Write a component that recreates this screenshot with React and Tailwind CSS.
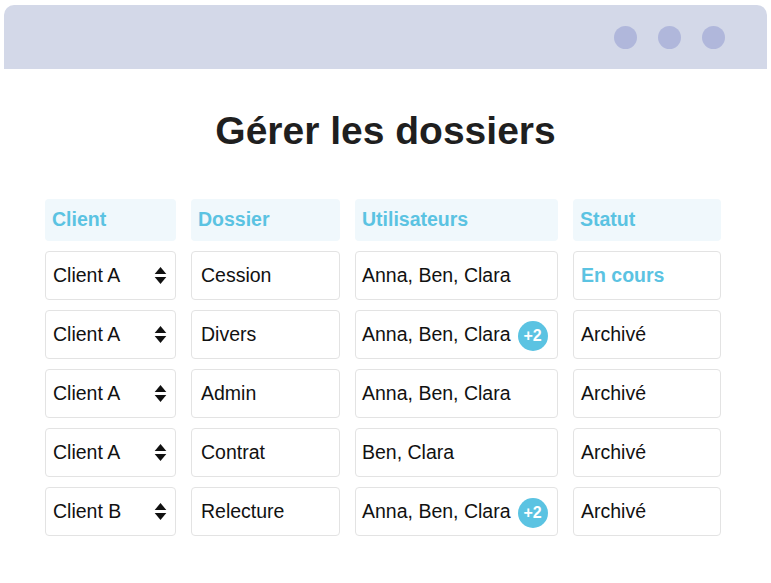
import React from 'react'

const rows = [
  { client: 'Client A', dossier: 'Cession', users: 'Anna, Ben, Clara', extra: null, status: 'En cours' },
  { client: 'Client A', dossier: 'Divers', users: 'Anna, Ben, Clara', extra: '+2', status: 'Archivé' },
  { client: 'Client A', dossier: 'Admin', users: 'Anna, Ben, Clara', extra: null, status: 'Archivé' },
  { client: 'Client A', dossier: 'Contrat', users: 'Ben, Clara', extra: null, status: 'Archivé' },
  { client: 'Client B', dossier: 'Relecture', users: 'Anna, Ben, Clara', extra: '+2', status: 'Archivé' },
]

const headers = ['Client', 'Dossier', 'Utilisateurs', 'Statut']

const SortIcon = () => (
  <svg width="13" height="19" viewBox="0 0 12 18" className="shrink-0">
    <path d="M6 1 L11.5 7.5 H0.5 Z" fill="#111" />
    <path d="M6 17 L11.5 10.5 H0.5 Z" fill="#111" />
  </svg>
)

const Cell = ({ children, className = 'text-[#111]' }) => (
  <div
    className={`h-[49px] flex items-center whitespace-nowrap rounded-[4px] border border-[#e3e3e3] bg-white px-[7px] text-[19.5px] ${className}`}
  >
    {children}
  </div>
)

export default function App() {
  return (
    <div
      className="w-[771px] h-[583px] bg-white overflow-hidden"
      style={{ fontFamily: '"Liberation Sans", Arial, sans-serif' }}
    >
      <div className="pt-[5px] px-[4px]">
        <div className="h-[64px] rounded-t-[10px] bg-[#d3d8e8] flex items-center justify-end gap-[21px] pr-[42px]">
          <span className="w-[23px] h-[23px] rounded-full bg-[#b0b7db]" />
          <span className="w-[23px] h-[23px] rounded-full bg-[#b0b7db]" />
          <span className="w-[23px] h-[23px] rounded-full bg-[#b0b7db]" />
        </div>
      </div>

      <h1 className="mt-[41px] text-center text-[39px] font-bold leading-[42px] text-[#1f1f1f]">
        Gérer les dossiers
      </h1>

      <div className="ml-[45px] mt-[47px] grid grid-cols-[131px_149px_203px_148px] gap-x-[15px] gap-y-[10px]">
        {headers.map((h) => (
          <div
            key={h}
            className="h-[42px] rounded-[4px] bg-[#f0f8fc] px-[7px] flex items-center text-[19.5px] font-bold text-[#5bc3e2]"
          >
            {h}
          </div>
        ))}
        {rows.map((r, i) => (
          <React.Fragment key={i}>
            <Cell className="text-[#111] justify-between pr-[8px]">
              <span>{r.client}</span>
              <SortIcon />
            </Cell>
            <Cell className="text-[#111] pl-[9px]">{r.dossier}</Cell>
            <Cell className="text-[#111] pl-[6px] pr-[4px]">
              <span className="shrink-0">{r.users}</span>
              {r.extra && (
                <span className="ml-[7px] shrink-0 w-[30px] h-[30px] rounded-full bg-[#5bc3e2] text-white text-[16px] font-bold flex items-center justify-center mt-[2px]">
                  {r.extra}
                </span>
              )}
            </Cell>
            <Cell className={r.status === 'En cours' ? 'font-bold text-[#5bc3e2]' : 'text-[#111]'}>
              {r.status}
            </Cell>
          </React.Fragment>
        ))}
      </div>
    </div>
  )
}
